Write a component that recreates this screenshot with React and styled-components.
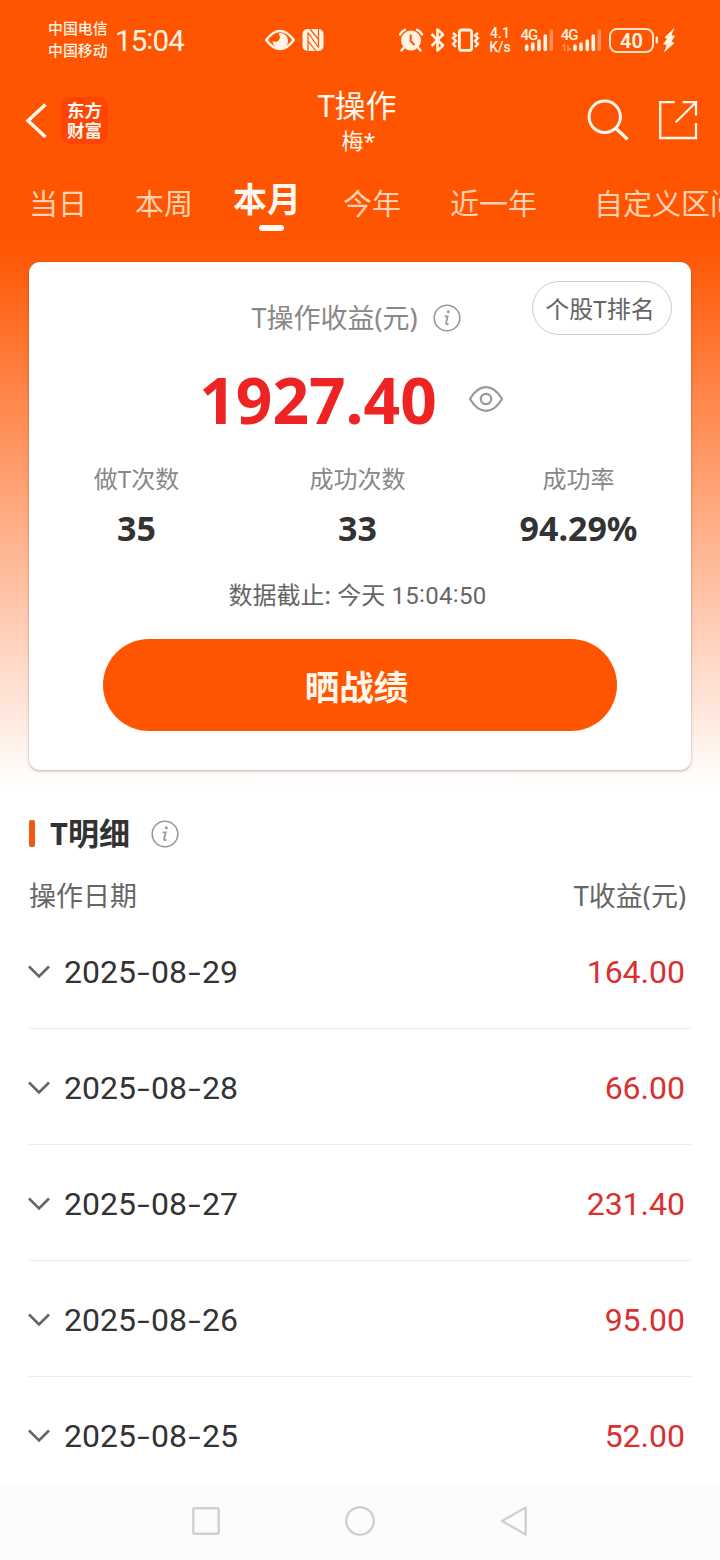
import React from 'react';
import styled, { createGlobalStyle } from 'styled-components';

const TABS = ['当日', '本周', '本月', '今年', '近一年', '自定义区间'];

const STATS = [
  { label: '做T次数', value: '35' },
  { label: '成功次数', value: '33' },
  { label: '成功率', value: '94.29%' },
];

const ROWS = [
  { date: '2025-08-29', profit: '164.00' },
  { date: '2025-08-28', profit: '66.00' },
  { date: '2025-08-27', profit: '231.40' },
  { date: '2025-08-26', profit: '95.00' },
  { date: '2025-08-25', profit: '52.00' },
];

function Signal({ x, bars }) {
  const tops = [44, 42, 39, 34, 29];
  return (
    <g stroke="#fff3e4" strokeWidth="3.6" strokeLinecap="round">
      {bars.map((bx, i) => (
        <path key={bx} d={`M${x + bx} ${tops[i] + 2}V49.4`} opacity={i === 4 ? 0.35 : 1} />
      ))}
    </g>
  );
}

function StatusBar() {
  return (
    <Status>
      <Carriers>
        <span>中国电信</span>
        <span>中国移动</span>
      </Carriers>
      <Clock>15<Colon>:</Colon>04</Clock>
      <StatusIcon $left={80} width="30" height="26" viewBox="265 27 30 26">
        <path d="M266.300 40C271 33.500 275 31 280 31S289 33.500 293.700 40C289 46.500 285 49 280 49S271 46.500 266.300 40Z" fill="none" stroke="#fff3e4" strokeWidth="2.600" strokeLinejoin="round" />
        <path d="M280.500 33A7.800 7.800 0 1 1 272.500 41Q275.500 42.700 278 41Q281.500 38.500 278.500 33.500Z" fill="#fff3e4" />
      </StatusIcon>
      <StatusIcon $left={7} width="22" height="26" viewBox="302 27 22 26">
        <rect x="302.500" y="29" width="21" height="22" rx="5" fill="#fff3e4" />
        <path d="M308 32.500V51M318.500 29V47.500M308 32.500L318.500 47.500M310 29L318.500 39.500M308 41L316 51" stroke="#ff5500" strokeWidth="1.200" fill="none" />
      </StatusIcon>
      <StatusIcon $left={75} width="25" height="26" viewBox="399 27 25 26">
        <circle cx="411" cy="40.500" r="10" fill="#fff3e4" />
        <path d="M404 47.500L401.500 50.500M418 47.500L420.500 50.500M400 34.500Q401.500 31 405 29.800M422 34.500Q420.500 31 417 29.800" stroke="#fff3e4" strokeWidth="2.400" fill="none" strokeLinecap="round" />
        <path d="M410.700 34.500V41L414.500 45" stroke="#ff5500" strokeWidth="2" fill="none" />
      </StatusIcon>
      <StatusIcon $left={6} width="16" height="26" viewBox="430 27 16 26">
        <path d="M431.500 34L443 45.500L437.500 50.500V29.500L443 34.500L431.500 46" stroke="#fff3e4" strokeWidth="2.600" fill="none" strokeLinejoin="round" />
      </StatusIcon>
      <StatusIcon $left={5} width="29" height="26" viewBox="451 27 29 26">
        <rect x="459.400" y="30" width="12.200" height="20.400" rx="2.500" fill="none" stroke="#fff3e4" strokeWidth="2.800" />
        <path d="M453 33L456 35.500L453 38L456 41L453 44L456 47M478 33L475 35.500L478 38L475 41L478 44L475 47" fill="none" stroke="#fff3e4" strokeWidth="2.400" />
      </StatusIcon>
      <Speed>
        <span>4.1</span>
        <span>K/s</span>
      </Speed>
      <StatusIcon $left={7} width="36" height="26" viewBox="519 27 36 26">
        <SignalLabel x="520.500" y="39.700">4G</SignalLabel>
        <Signal x={500} bars={[26.7, 32.7, 39, 45.3, 51.3]} />
      </StatusIcon>
      <StatusIcon $left={5} width="42" height="26" viewBox="560 27 42 26">
        <SignalLabel x="560.700" y="39.700">4G</SignalLabel>
        <path d="M562 46.500L564.500 44.500V51M568 44.500V50.500L571 48" stroke="#fff3e4" strokeWidth="1.500" fill="none" opacity="0.4" />
        <Signal x={500} bars={[75, 81, 87.3, 93.3, 99.3]} />
      </StatusIcon>
      <Battery>40</Battery>
      <StatusIcon $left={0} width="21" height="26" viewBox="654 27 21 26">
        <path d="M656.800 37.500V42.500" stroke="#fff3e4" strokeWidth="2.200" strokeLinecap="round" />
        <path d="M674.500 27.500L664.500 37.500L667 39L663 44L666.500 45L664 52.500L674.500 43L671.500 41.500L675 36L671.500 35Z" fill="#fff3e4" />
      </StatusIcon>
    </Status>
  );
}

function InfoIcon() {
  return (
    <svg width="28" height="28" viewBox="0 0 28 28" fill="none" stroke="#999">
      <circle cx="14" cy="14" r="12.800" strokeWidth="1.600" />
      <circle cx="15.300" cy="7.700" r="1.500" fill="#999" stroke="none" />
      <path d="M11.700 12.300H14.700L13 19.500Q13 20.700 15.500 19.700" strokeWidth="1.700" />
    </svg>
  );
}

function DetailRow({ date, profit }) {
  const parts = date.split('-');
  return (
    <Row>
      <Chevron width="24" height="16" viewBox="0 0 24 16">
        <path d="M2 2.500L12 12.500L22 2.500" fill="none" stroke="#666" strokeWidth="2.600" />
      </Chevron>
      <DateText>
        {parts[0]}<Dash>-</Dash>{parts[1]}<Dash>-</Dash>{parts[2]}
      </DateText>
      <Profit>{profit}</Profit>
    </Row>
  );
}

function App() {
  return (
    <Page>
      <GlobalStyle />
      <StatusBar />
      <Header>
        <Side>
          <svg width="22" height="38" viewBox="25 101 22 38">
            <path d="M45.500 104.500L28 120.700L45.500 137" fill="none" stroke="#fff6ec" strokeWidth="3.600" />
          </svg>
          <Logo>
            <span>东方</span>
            <span>财富</span>
          </Logo>
        </Side>
        <Heading>
          <Title>T操作</Title>
          <UserName>梅*</UserName>
        </Heading>
        <Side $end>
          <svg width="42" height="42" viewBox="587 99 42 42" fill="none" stroke="#fff6ec">
            <circle cx="604.700" cy="116.800" r="15.700" strokeWidth="3" />
            <path d="M616 128.500L627.500 139.200" strokeWidth="3.400" />
          </svg>
          <svg width="40" height="42" viewBox="658 99 40 42" fill="none" stroke="#fff6ec" strokeWidth="2.300">
            <path d="M674.700 102.200H660.200V138H696V123" />
            <path d="M682.500 102.200H696V115.500M696 102.200L675.500 122.500" />
          </svg>
        </Side>
      </Header>
      <Tabs>
        {TABS.map((tab) => <Tab key={tab} $active={tab === '本月'}>{tab}</Tab>)}
      </Tabs>
      <Card>
        <CardTitle>
          <span>T操作收益(元)</span>
          <InfoIcon />
        </CardTitle>
        <RankButton>个股T排名</RankButton>
        <Total>
          <Amount>1927.40</Amount>
          <svg width="36" height="28" viewBox="0 0 36 28" fill="none" stroke="#999" strokeWidth="2.200">
            <path d="M2 14C7 5.500 12 2.200 18 2.200S29 5.500 34 14C29 22.500 24 25.800 18 25.800S7 22.500 2 14Z" strokeLinejoin="round" />
            <circle cx="18" cy="14" r="5.200" />
          </svg>
        </Total>
        <Stats>
          {STATS.map((s) => (
            <Stat key={s.label}>
              <StatLabel>{s.label}</StatLabel>
              <StatValue>{s.value}</StatValue>
            </Stat>
          ))}
        </Stats>
        <Deadline>数据截止: 今天 <Time>15<Colon>:</Colon>04<Colon>:</Colon>50</Time></Deadline>
        <ShareButton>晒战绩</ShareButton>
      </Card>
      <Details>
        <SectionTitle>
          <Mark />
          <h2>T明细</h2>
          <InfoIcon />
        </SectionTitle>
        <TableHead>
          <span>操作日期</span>
          <span>T收益(元)</span>
        </TableHead>
        {ROWS.map((row) => <DetailRow key={row.date} {...row} />)}
      </Details>
      <NavBar>
        <svg width="30" height="32" viewBox="191 1506 30 32">
          <rect x="193.300" y="1509.300" width="25.400" height="25.400" rx="1" />
        </svg>
        <svg width="32" height="32" viewBox="344 1505 32 32">
          <circle cx="360" cy="1521" r="13.800" />
        </svg>
        <svg width="30" height="32" viewBox="497 1506 30 32">
          <path d="M500 1522L523.700 1508.500V1535.500Z" strokeLinejoin="round" />
        </svg>
      </NavBar>
    </Page>
  );
}

export default App;

const GlobalStyle = createGlobalStyle`
  * {
    box-sizing: border-box;
  }
  body {
    margin: 0;
    font-family: "Noto Sans", "Noto Sans CJK SC", sans-serif;
  }
  svg {
    flex: none;
    display: block;
  }
`;

const Page = styled.div`
  width: 720px;
  height: 1560px;
  display: flex;
  flex-direction: column;
  overflow: hidden;
  white-space: nowrap;
  background: linear-gradient(#ff5500 0, #ff5500 240px, #fff 785px);
`;

const Status = styled.div`
  height: 80px;
  flex: none;
  display: flex;
  align-items: center;
  padding-left: 48px;
  color: #fff3e4;
  font-family: Roboto, "Noto Sans CJK SC", sans-serif;
`;

const Carriers = styled.div`
  width: 60px;
  display: flex;
  flex-direction: column;
  font-size: 14.900px;
  line-height: 22.500px;
  font-weight: 500;
`;

const Clock = styled.div`
  width: 70px;
  margin: 0 0 0 7px;
  font-size: 29.500px;
  line-height: 40px;
  letter-spacing: -0.900px;
`;

const Colon = styled.span`
  vertical-align: 0.070em;
`;

const StatusIcon = styled.svg`
  margin-left: ${props => props.$left}px;
`;

const SignalLabel = styled.text`
  font-size: 15px;
  font-weight: 500;
  letter-spacing: -1px;
  fill: #fff3e4;
`;

const Speed = styled.div`
  width: 24px;
  margin-left: 8px;
  display: flex;
  flex-direction: column;
  align-items: center;
  font-size: 14px;
  line-height: 14px;
  font-weight: 500;
`;

const Battery = styled.div`
  width: 45px;
  height: 25px;
  margin-left: 7px;
  border: 2px solid #ffe0c8;
  border-radius: 8px;
  font-size: 20px;
  line-height: 22px;
  font-weight: 600;
  text-align: center;
`;

const Header = styled.header`
  height: 80px;
  flex: none;
  display: grid;
  grid-template-columns: 1fr 200px 1fr;
  padding: 0 22px 0 25px;
  color: #fff6ec;
`;

const Side = styled.div`
  display: flex;
  align-items: center;
  justify-content: ${props => props.$end ? 'flex-end' : 'flex-start'};
  gap: ${props => props.$end ? '29px' : '14px'};
`;

const Logo = styled.div`
  width: 47px;
  height: 47px;
  display: flex;
  flex-direction: column;
  align-items: center;
  justify-content: center;
  border-radius: 9px;
  background: #ff4505;
  font-size: 17.500px;
  line-height: 20px;
  font-weight: 700;
`;

const Heading = styled.div`
  display: flex;
  flex-direction: column;
  align-items: center;
  padding: 5px 9px 0 0;
`;

const Title = styled.div`
  font-size: 31px;
  line-height: 40px;
`;

const UserName = styled.div`
  margin-left: 3px;
  font-size: 22px;
  line-height: 31px;
`;

const Tabs = styled.nav`
  height: 102px;
  flex: none;
  display: grid;
  grid-template-columns: 106px 98px 110px 107px 144px 160px;
  padding: 14px 0 0 29px;
`;

const Tab = styled.div`
  font-size: ${props => props.$active ? 34 : 29}px;
  font-weight: ${props => props.$active ? 700 : 400};
  color: ${props => props.$active ? '#fff8f0' : '#ffd2b3'};
  line-height: ${props => props.$active ? 50 : 60}px;
  &::after {
    content: '';
    display: ${props => props.$active ? 'block' : 'none'};
    width: 25px;
    height: 6px;
    margin: 1px 0 0 26px;
    border-radius: 3px;
    background: #fff8f0;
  }
`;

const Card = styled.section`
  position: relative;
  height: 508px;
  flex: none;
  margin: 0 29px;
  display: flex;
  flex-direction: column;
  align-items: center;
  border-radius: 11px;
  background: #fff;
  box-shadow: 0 1px 3px rgba(0, 0, 0, 0.3);
`;

const CardTitle = styled.div`
  display: flex;
  align-items: center;
  gap: 15px;
  margin: 36px 8px 0 0;
  font-size: 27px;
  line-height: 40px;
  color: #888;
`;

const RankButton = styled.button`
  position: absolute;
  top: 19px;
  right: 19px;
  width: 140px;
  height: 54px;
  padding: 0 4px 1px 0;
  border: 1px solid #ccc;
  border-radius: 27px;
  background: transparent;
  color: #666;
  font-family: inherit;
  font-size: 24px;
`;

const Total = styled.div`
  display: flex;
  align-items: center;
  gap: 31px;
  margin: 16px 0 0;
  padding-right: 17px;
`;

const Amount = styled.div`
  padding-top: 2px;
  font-size: 64px;
  line-height: 88px;
  font-weight: 700;
  color: #ee2424;
`;

const Stats = styled.div`
  width: 663px;
  display: grid;
  grid-template-columns: repeat(3, 1fr);
  margin: 15px 5px 0 0;
`;

const Stat = styled.div`
  display: flex;
  flex-direction: column;
  align-items: center;
`;

const StatLabel = styled.div`
  font-size: 24px;
  line-height: 40px;
  color: #888;
`;

const StatValue = styled.div`
  margin-top: 4px;
  font-size: 34px;
  line-height: 50px;
  font-weight: 700;
  color: #333;
`;

const Deadline = styled.div`
  margin: 21px 5px 0 0;
  font-size: 24px;
  line-height: 40px;
  color: #666;
`;

const Time = styled.span`
  font-family: Roboto, sans-serif;
  letter-spacing: 0.300px;
`;

const ShareButton = styled.button`
  width: 514px;
  height: 92px;
  margin-top: 23px;
  padding: 0 7px 0 0;
  border: none;
  border-radius: 46px;
  background: #ff5500;
  color: #fff6ec;
  font-family: inherit;
  font-size: 34.500px;
  font-weight: 700;
`;

const Details = styled.section`
  flex: 1;
  min-height: 0;
  overflow: hidden;
  padding: 37px 29px 0;
`;

const SectionTitle = styled.div`
  height: 53px;
  display: flex;
  align-items: center;
  h2 {
    margin: 0 21px 2px 15px;
    font-size: 31px;
    line-height: 50px;
    font-weight: 700;
    color: #333;
  }
`;

const Mark = styled.i`
  width: 6px;
  height: 27px;
  border-radius: 2px;
  background: #f05a10;
`;

const TableHead = styled.div`
  display: flex;
  justify-content: space-between;
  height: 53px;
  padding: 16px 5px 0 0;
  font-size: 27px;
  line-height: 40px;
  color: #666;
`;

const Row = styled.div`
  height: 116px;
  display: flex;
  align-items: center;
  padding-top: 3px;
  border-bottom: 1px solid #ebebeb;
  font-family: Roboto, sans-serif;
  font-size: 32px;
  line-height: 44px;
`;

const Chevron = styled.svg`
  margin-left: -2px;
`;

const DateText = styled.span`
  margin-left: 13px;
  color: #333;
`;

const Dash = styled.span`
  display: inline-block;
  width: 15px;
  text-align: center;
  transform: scaleX(1.400);
`;

const Profit = styled.span`
  margin-left: auto;
  padding-right: 6px;
  color: #d93030;
`;

const NavBar = styled.footer`
  height: 77px;
  flex: none;
  display: flex;
  align-items: center;
  justify-content: center;
  gap: 123px;
  padding-bottom: 1px;
  background: #fcfcfc;
  svg {
    fill: none;
    stroke: #d0d0d0;
    stroke-width: 2.400;
  }
`;
